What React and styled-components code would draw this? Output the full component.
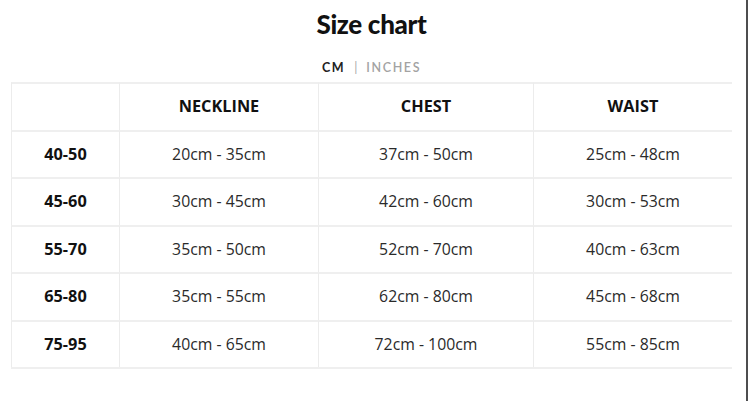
import React from "react";
import styled, { createGlobalStyle } from "styled-components";

const Global = createGlobalStyle`
  html, body { margin: 0; padding: 0; background: #fff; }
  body { font-family: "Open Sans", "Noto Sans", sans-serif; color: #222; }
`;

const Page = styled.div`
  display: flex;
  width: 748px;
  height: 401px;
  overflow: hidden;
`;

const Main = styled.main`
  flex: 1;
  display: flex;
  flex-direction: column;
  padding: 0 14px 0 11px;
`;

const Edge = styled.div`
  width: 2px;
  background: #4d4d4f;
`;

const Title = styled.h1`
  margin: 9px 0 0;
  text-align: center;
  font-family: "Lato", "Open Sans", sans-serif;
  font-weight: 900;
  font-size: 26px;
  line-height: 30px;
  color: #111;
  letter-spacing: -0.3px;
`;

const Units = styled.div`
  display: flex;
  justify-content: center;
  align-items: center;
  gap: 9px;
  margin-top: 20px;
  height: 16px;
  font-family: "Lato", "Open Sans", sans-serif;
  font-size: 12.5px;
  letter-spacing: 1.6px;
`;

const Unit = styled.span`
  font-weight: ${(p) => (p.$active ? 700 : 600)};
  color: ${(p) => (p.$active ? "#222" : "#a3a3a3")};
`;

const Sep = styled.span`
  color: #aaa;
  font-weight: 400;
  letter-spacing: 0;
`;

const Table = styled.div`
  margin-top: 7px;
  display: grid;
  grid-template-columns: 108px 199px 215px 199px;
  border-bottom: 2px solid #efefef;
`;

const Cell = styled.div`
  height: 45.5px;
  border-top: 2px solid #efefef;
  border-left: 1px solid #ececec;
  display: flex;
  align-items: center;
  justify-content: center;
  padding-bottom: 1px;
  box-sizing: border-box;
  height: 47.5px;
  font-size: ${(p) => (p.$bold ? "16.3px" : "15.8px")};
  font-weight: ${(p) => (p.$bold ? 700 : 400)};
  color: ${(p) => (p.$bold ? "#111" : "#2a2a2a")};
`;

const headers = ["", "NECKLINE", "CHEST", "WAIST"];
const rows = [
  ["40-50", "20cm - 35cm", "37cm - 50cm", "25cm - 48cm"],
  ["45-60", "30cm - 45cm", "42cm - 60cm", "30cm - 53cm"],
  ["55-70", "35cm - 50cm", "52cm - 70cm", "40cm - 63cm"],
  ["65-80", "35cm - 55cm", "62cm - 80cm", "45cm - 68cm"],
  ["75-95", "40cm - 65cm", "72cm - 100cm", "55cm - 85cm"],
];

export default function App() {
  return (
    <>
      <Global />
      <Page>
        <Main>
          <Title>Size chart</Title>
          <Units>
            <Unit $active>CM</Unit>
            <Sep>|</Sep>
            <Unit>INCHES</Unit>
          </Units>
          <Table>
            {headers.map((h, i) => (
              <Cell key={"h" + i} $bold>
                {h}
              </Cell>
            ))}
            {rows.map((r, ri) =>
              r.map((c, ci) => (
                <Cell key={ri + "-" + ci} $bold={ci === 0}>
                  {c}
                </Cell>
              ))
            )}
          </Table>
        </Main>
        <Edge />
      </Page>
    </>
  );
}
